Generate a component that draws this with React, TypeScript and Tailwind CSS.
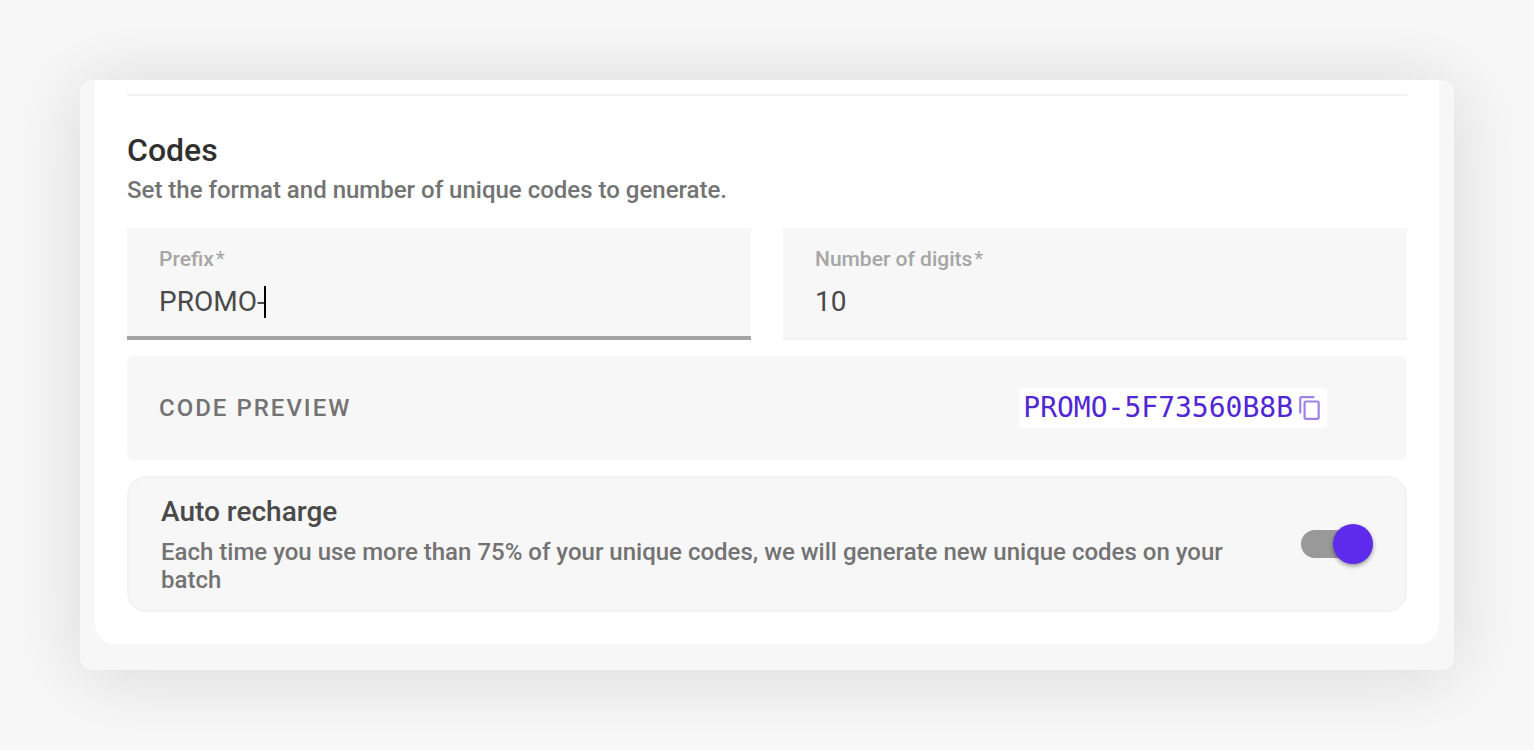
import { useState } from 'react';

const PREVIEW_CODE = 'PROMO-5F73560B8B';

type FieldProps = {
  id: string;
  label: string;
  value: string;
  active?: boolean;
  onChange: (value: string) => void;
};

function Field({ id, label, value, active, onChange }: FieldProps) {
  return (
    <div
      className={
        active
          ? 'h-28 min-w-0 px-8 pt-4 bg-[#f7f7f7] border-b-4 border-[#a3a3a3]'
          : 'h-28 min-w-0 px-8 pt-4 bg-[#f7f7f7] border-b-2 border-[#f2f2f2]'
      }
    >
      <label htmlFor={id} className="block text-[21px] leading-[30px] font-medium text-[#a6a6a6]">
        {label}
        <span className="ml-0.5 font-normal">*</span>
      </label>
      <div className="mt-3 flex items-center">
        <input
          id={id}
          type="text"
          value={value}
          onChange={(e) => onChange(e.target.value)}
          className="field-sizing-content max-w-full bg-transparent text-[28px] leading-8 text-[#4a4a4a] caret-transparent outline-none"
        />
        {active ? <span className="-ml-px h-8 w-0.5 shrink-0 bg-black" /> : null}
      </div>
    </div>
  );
}

function CopyIcon() {
  return (
    <svg viewBox="0 0 24 24" className="size-[26px]" fill="#9d83e5" aria-hidden="true">
      <path d="M16 1H4c-1.1 0-2 .9-2 2v14h2V3h12V1zm3 4H8c-1.1 0-2 .9-2 2v14c0 1.1.9 2 2 2h11c1.1 0 2-.9 2-2V7c0-1.1-.9-2-2-2zm0 16H8V7h11v14z" />
    </svg>
  );
}

export default function App() {
  const [prefix, setPrefix] = useState('PROMO-');
  const [digits, setDigits] = useState('10');
  const [recharge, setRecharge] = useState(true);

  return (
    <main className="min-h-screen bg-[#f7f7f7] p-20 font-[Roboto,sans-serif]">
      <div className="rounded-xl bg-[#f7f7f7] px-[15px] pb-[26px] shadow-[0_4px_76px_rgba(0,0,0,0.13)]">
        <section className="rounded-b-[20px] bg-white px-8 pt-[14px] pb-8">
          <hr className="border-t-2 border-[#f2f2f2]" />

          <h2 className="mt-8 text-[32px] leading-11 font-medium text-[#303030]">Codes</h2>
          <p className="text-2xl leading-9 font-medium text-[#737373]">
            Set the format and number of unique codes to generate.
          </p>

          <div className="mt-5 grid grid-cols-2 gap-8">
            <Field id="prefix" label="Prefix" value={prefix} onChange={setPrefix} active />
            <Field id="digits" label="Number of digits" value={digits} onChange={setDigits} />
          </div>

          <div className="mt-4 flex h-26 items-center justify-between rounded-lg bg-[#f7f7f7] pr-20 pl-8">
            <span className="text-2xl font-medium tracking-[2px] text-[#737373]">CODE PREVIEW</span>
            <div className="flex h-10 items-center rounded bg-white px-1">
              <code className="font-['DejaVu_Sans_Mono',monospace] text-[28px] leading-10 text-[#5126d3]">
                {PREVIEW_CODE}
              </code>
              <button
                type="button"
                aria-label="Copy code"
                className="ml-1 cursor-pointer"
                onClick={() => navigator.clipboard?.writeText(PREVIEW_CODE)}
              >
                <CopyIcon />
              </button>
            </div>
          </div>

          <div className="mt-4 flex items-center justify-between gap-16 rounded-[20px] border-2 border-[#f2f2f2] bg-[#f7f7f7] px-8 py-4">
            <div>
              <label htmlFor="recharge" className="block text-[28px] leading-9 font-medium text-[#4a4a4a]">
                Auto recharge
              </label>
              <p id="recharge-hint" className="mt-2 text-2xl leading-7 font-medium text-[#737373]">
                Each time you use more than 75% of your unique codes, we will generate new unique codes on your batch
              </p>
            </div>
            <span className="relative flex h-10 w-[72px] shrink-0 items-center">
              <input
                id="recharge"
                type="checkbox"
                role="switch"
                aria-describedby="recharge-hint"
                checked={recharge}
                onChange={(e) => setRecharge(e.target.checked)}
                className="peer h-7 w-16 cursor-pointer appearance-none rounded-full bg-[#999999]"
              />
              <span className="pointer-events-none absolute top-0 left-0 size-10 rounded-full bg-white shadow-[0_2px_4px_rgba(0,0,0,0.4)] peer-checked:left-8 peer-checked:bg-[#5e2bec]" />
            </span>
          </div>
        </section>
      </div>
    </main>
  );
}
